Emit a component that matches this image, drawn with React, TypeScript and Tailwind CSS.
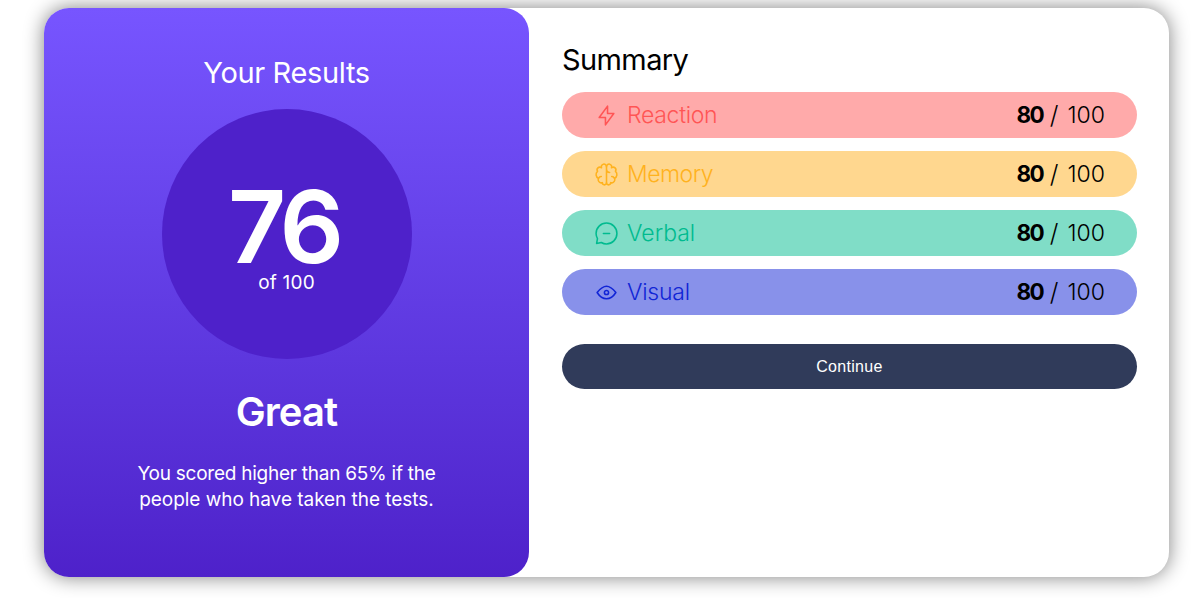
import type { ReactNode } from "react";

type Row = { label: string; bg: string; text: string; spacing: string; icon: ReactNode };

const rows: Row[] = [
  {
    label: "Reaction",
    bg: "bg-[#ffaaaa]",
    text: "text-[#ff5555]",
    spacing: "tracking-[-0.3px]",
    icon: <path d="M10.833 8.333V2.5l-6.666 9.167h5V17.5l6.666-9.167h-5Z" />,
  },
  {
    label: "Memory",
    bg: "bg-[#ffd78f]",
    text: "text-[#ffb21e]",
    spacing: "tracking-[-0.5px]",
    icon: (
      <>
        <path d="M5.833 11.667a2.5 2.5 0 1 0 .834 4.858" />
        <path d="M3.553 13.004a3.333 3.333 0 0 1-.728-5.53m.025-.067a2.083 2.083 0 0 1 2.983-2.824m.199.054A2.083 2.083 0 1 1 10 3.75v12.917a1.667 1.667 0 0 1-3.333 0M10 5.833a2.5 2.5 0 0 0 2.5 2.5m1.667 3.334a2.5 2.5 0 1 1-.834 4.858" />
        <path d="M16.447 13.004a3.334 3.334 0 0 0 .728-5.53m-.025-.067a2.083 2.083 0 0 0-2.983-2.824M10 3.75a2.085 2.085 0 0 1 2.538-2.033 2.084 2.084 0 0 1 1.43 2.92m-.635 12.03a1.667 1.667 0 0 1-3.333 0" />
      </>
    ),
  },
  {
    label: "Verbal",
    bg: "bg-[#80ddc7]",
    text: "text-[#00bb8f]",
    spacing: "tracking-[0px]",
    icon: (
      <>
        <path d="M7.5 10h5" />
        <path d="M10 18.333A8.333 8.333 0 1 0 1.667 10c0 1.518.406 2.942 1.115 4.167l-.699 3.75 3.75-.699A8.295 8.295 0 0 0 10 18.333Z" />
      </>
    ),
  },
  {
    label: "Visual",
    bg: "bg-[#8891ea]",
    text: "text-[#1125d6]",
    spacing: "tracking-[-0.25px]",
    icon: (
      <>
        <path d="M10 11.667a1.667 1.667 0 1 0 0-3.334 1.667 1.667 0 0 0 0 3.334Z" />
        <path d="M17.5 10c-1.574 2.492-4.402 5-7.5 5s-5.926-2.508-7.5-5C4.416 7.632 6.66 5 10 5s5.584 2.632 7.5 5Z" />
      </>
    ),
  },
];

export default function App() {
  return (
    <div className="h-[598px] overflow-hidden bg-white pt-2 pl-11 font-['Inter',sans-serif]">
      <main className="flex h-[569px] w-[1125px] rounded-[25px] bg-white shadow-[0_0_20px_#808080]">
        <section className="flex w-[485px] flex-col items-center rounded-[25px] bg-linear-to-b from-[#7755ff] to-[#4e21ca] pt-[45px] text-white">
          <h1 className="text-[29px] leading-10 tracking-[-0.35px] whitespace-nowrap">Your Results</h1>
          <div className="mt-4 flex size-[250px] flex-col items-center rounded-full bg-[#4e21ca] pt-[78px]">
            <span className="pr-[6px] text-[101px] leading-[78px] font-semibold tracking-[-5px] whitespace-nowrap">76</span>
            <span className="mt-[6px] text-[19px] leading-6 tracking-[0.2px] whitespace-nowrap">of 100</span>
          </div>
          <h2 className="mt-[27px] text-[40px] leading-[52px] font-semibold tracking-[-0.9px] whitespace-nowrap">Great</h2>
          <p className="mt-[23px] text-center text-[19px] leading-[26px] whitespace-nowrap">
            <span className="block tracking-[-0.25px]">You scored higher than 65% if the</span>
            <span className="block tracking-[-0.04px]">people who have taken the tests.</span>
          </p>
        </section>
        <section className="flex-1 pt-8 pr-8 pl-[33px]">
          <h1 className="text-[29px] leading-10 tracking-[-0.6px] whitespace-nowrap">Summary</h1>
          <ul className="mt-3 flex flex-col gap-[13px]">
            {rows.map((row) => (
              <li key={row.label} className={`flex h-[46px] items-center rounded-full pr-8 pl-8 ${row.bg}`}>
                <svg
                  viewBox="0 0 20 20"
                  className={`size-[25px] ${row.text}`}
                  fill="none"
                  stroke="currentColor"
                  strokeWidth="1.25"
                  strokeLinecap="round"
                  strokeLinejoin="round"
                >
                  {row.icon}
                </svg>
                <span className={`ml-2 text-[23px] leading-8 font-[350] ${row.text} ${row.spacing}`}>{row.label}</span>
                <span className="ml-auto flex items-center text-[23px] leading-8 font-[350] whitespace-nowrap">
                  <b className="text-[22.5px] font-bold tracking-[-1.8px]">80</b>
                  <span className="mr-[9px] ml-[7px] text-[25px] font-light">/</span>
                  <span>100</span>
                </span>
              </li>
            ))}
          </ul>
          <button className="mt-[29px] h-[45px] w-full rounded-full bg-[#303b5a] font-['Liberation_Sans',Arial,sans-serif] text-base tracking-[0.3px] text-white">
            Continue
          </button>
        </section>
      </main>
    </div>
  );
}
